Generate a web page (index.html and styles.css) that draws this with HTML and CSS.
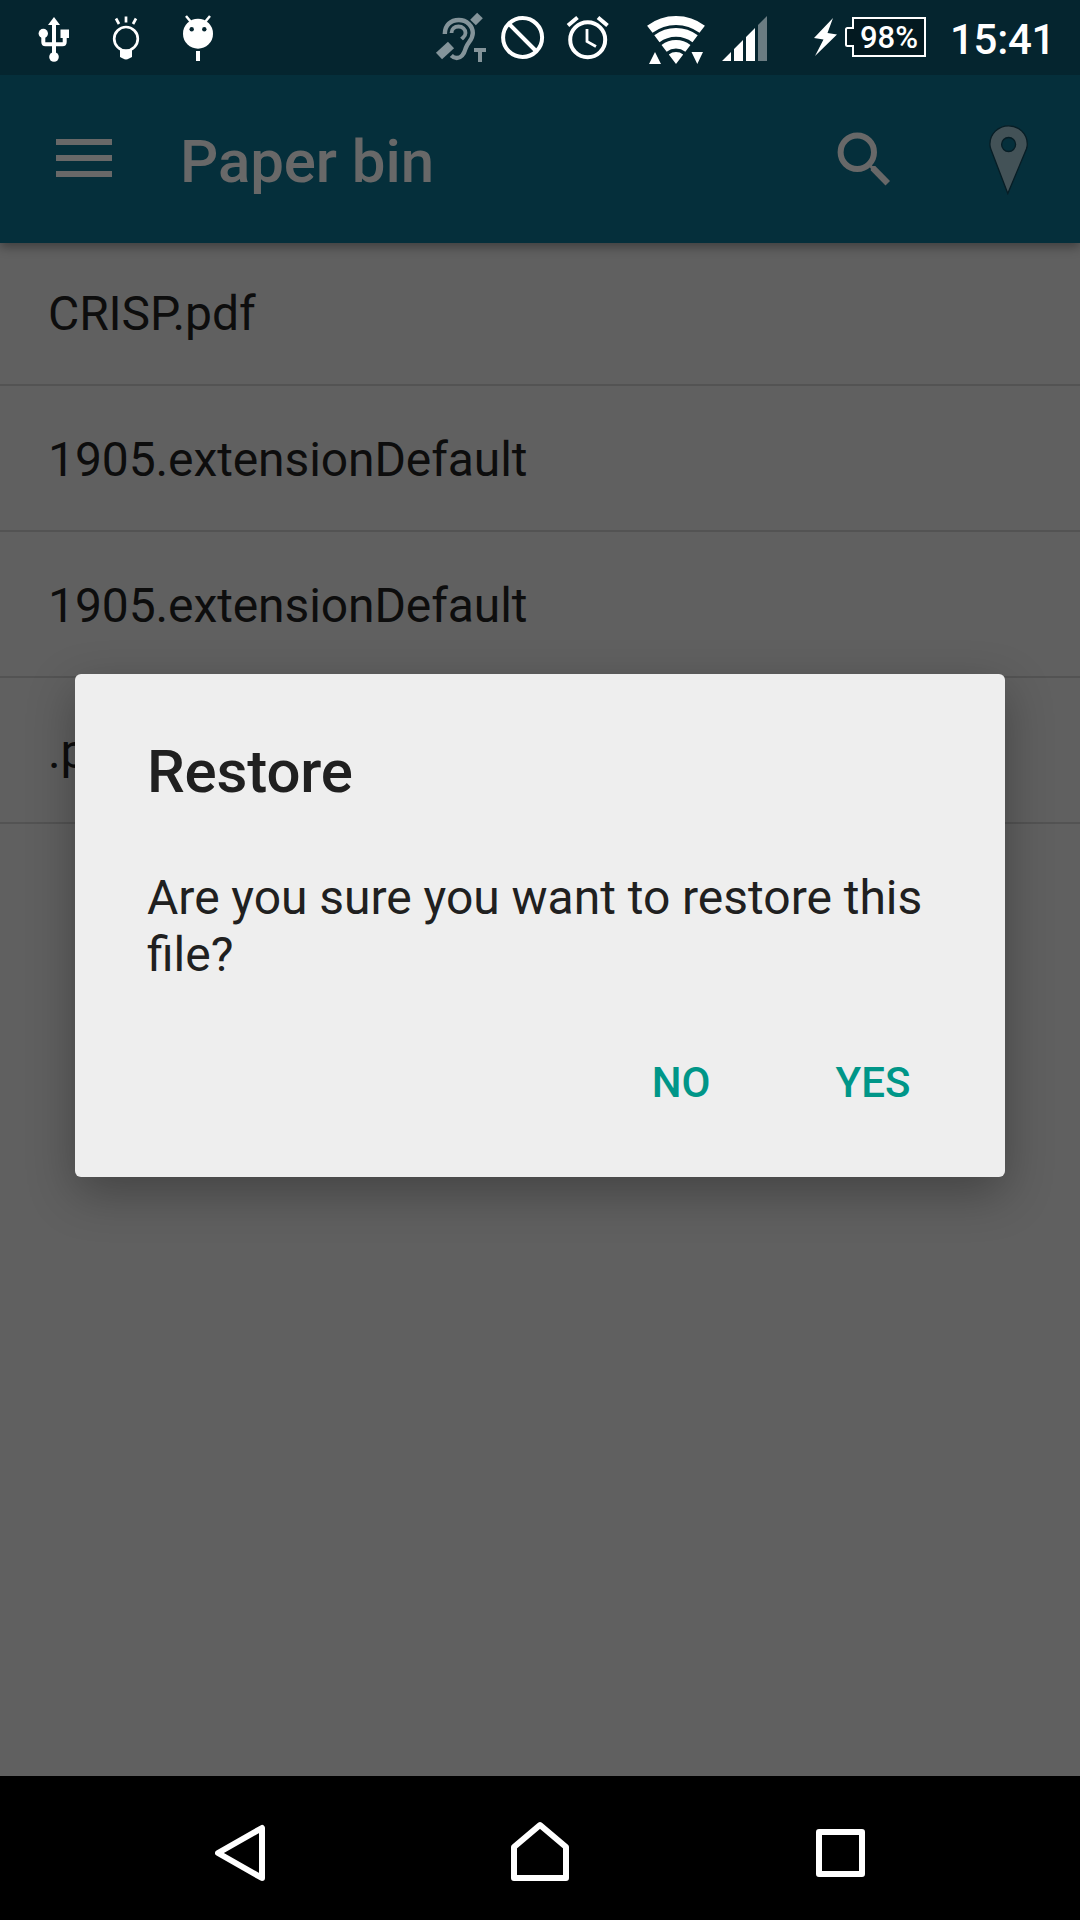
FILE: index.html
```html
<!DOCTYPE html>
<html lang="en">
<head>
<meta charset="utf-8">
<title>Paper bin</title>
<link rel="stylesheet" href="styles.css">
</head>
<body>
<div class="screen">
  <header class="status-bar">
    <div class="status-group">
      <svg class="icon-usb" viewBox="20 0 70 75" fill="#fff"><path d="M54 17l6 8h-4v35h-4V25h-4z"/><circle cx="43.3" cy="33.5" r="4.7"/><circle cx="54" cy="57" r="4.8"/><path d="M60.5 29.5H69V38h-8.500z"/><path d="M43.300 36v6q0 2.200 2.200 2.200h17q2.200 0 2.200-2.200v-6" fill="none" stroke="#fff" stroke-width="4"/></svg>
      <svg class="icon-bulb" viewBox="90 0 72 75" fill="none" stroke="#fff" stroke-width="2.7"><circle cx="126" cy="38.800" r="11.800"/><path d="M120 49q6 4 12 0v8l-3 1.500q-3 2-6 0l-3-1.500z" fill="#fff" stroke="none"/><path d="M126 16.500v6M116 18.500l3 5.500M136 18.500l-3 5.500"/></svg>
      <svg class="icon-bug" viewBox="162 0 72 75" fill="#fff"><circle cx="198" cy="33.700" r="15"/><path d="M186 16l5 6M210 16l-5 6" stroke="#fff" stroke-width="2.500"/><circle cx="191.700" cy="29.300" r="2.200" fill="#05252f"/><circle cx="204.300" cy="29.300" r="2.200" fill="#05252f"/><path d="M196 51h4v10h-4z"/></svg>
    </div>
    <div class="status-group">
      <svg class="icon-ear" viewBox="430 0 65 75" fill="none" stroke="#84949a"><path d="M444.800 34c0-9 6-14 14-14s14 6 14 13c0 7-5 9-7 15-2 7-5 10-9 10-3 0-4-1-5.500-2.500" stroke-width="4.400"/><path d="M451.500 33c0-4 3-6.500 7-6.500s7 3 7 6.500-2 4-4 6" stroke-width="3.800"/><path d="M439 56l12-11" stroke-width="9"/><path d="M473 22.500l7-7" stroke-width="8"/><path d="M474 50h12M480 50v12" stroke-width="4"/></svg>
      <svg class="icon-none" viewBox="495 0 60 75" fill="none" stroke="#fff" stroke-width="4"><circle cx="522.600" cy="37.500" r="19.500"/><path d="M509 24l27.500 27.500"/></svg>
      <svg class="icon-alarm" viewBox="555 0 75 75" fill="none" stroke="#fff" stroke-width="4"><circle cx="587.700" cy="39.700" r="17.500"/><path d="M568 25.500l9.500-8M598 17.500l9.500 8"/><path d="M587 29v12.500l9 5" stroke-width="2.800"/></svg>
      <svg class="icon-wifi" viewBox="630 0 85 75" fill="none" stroke="#fff"><path d="M649.800 29.250a43.500 43.500 0 0 1 52.400 0" stroke-width="9"/><path d="M656.900 38.700a31.700 31.700 0 0 1 38.200 0" stroke-width="8.700"/><path d="M664.100 48.300a19.700 19.700 0 0 1 23.800 0" stroke-width="8.500"/><path d="M676 64l-7.200-9.600a12 12 0 0 1 14.400 0zM655 52l6 12h-12zM691.500 52H703l-5.700 12z" fill="#fff" stroke="none"/></svg>
      <svg class="icon-signal" viewBox="715 0 95 75" fill="#fff"><path d="M722 61l9-9v9zM734 61V49l9-9v21zM746 61V37l9-9v33z"/><path d="M758 61V25l9-9v45z" fill="#6b7c82"/></svg>
      <svg class="icon-bolt" viewBox="810 0 34 75" fill="#fff"><path d="M833 18l-19 20 9.500 1.500L815 56l22-21.500-9.500-1.500z"/></svg>
      <div class="battery">
        <svg class="battery-shape" viewBox="844 0 83 75" fill="#031920" stroke="#fff" stroke-width="2"><path d="M854 18h71v38h-72V46h-5.500q-1.500 0-1.500-1.500v-15q0-1.500 1.500-1.500h5.500V18z"/></svg>
        <span class="battery-level">98%</span>
      </div>
      <span class="clock">15:41</span>
    </div>
  </header>

  <div class="app-bar">
    <svg class="menu-icon" viewBox="0 0 56 38" fill="#686868"><path d="M0 0h56v6H0zM0 16h56v6H0zM0 32h56v6H0z"/></svg>
    <h1 class="app-title">Paper bin</h1>
    <svg class="search-icon" viewBox="832 75 144 168" fill="none" stroke="#686868" stroke-width="6"><circle cx="857.300" cy="152.300" r="16.700"/><path d="M869 164.500l3.500 3.500" stroke-width="3"/><path d="M870.800 166h4.500L890 181l-4.500 4.500L870.800 170.500z" fill="#686868" stroke="none"/></svg>
    <svg class="pin-icon" viewBox="976 75 104 168" fill="#435257" stroke="#071d25" stroke-width="1.300"><path fill-rule="evenodd" d="M1007.800 193.500L990.800 149Q989.900 146.500 989.900 144a18.700 18.200 0 0 1 37.400 0q0 2.500-.9 5zM1015.600 144.500a7 7 0 1 0-14 0 7 7 0 1 0 14 0z"/></svg>
  </div>

  <main class="file-list">
    <div class="file-row file-row-first">CRISP.pdf</div>
    <div class="file-row">1905.extensionDefault</div>
    <div class="file-row">1905.extensionDefault</div>
    <div class="file-row">.pdf</div>
  </main>

  <nav class="nav-bar">
    <svg class="nav-back" viewBox="215 1820 51 64"><path d="M218 1853l44-25v50z"/></svg>
    <svg class="nav-home" viewBox="511 1820 58 64"><path d="M514 1878v-31l26-22 26 22v31z"/></svg>
    <svg class="nav-recent" viewBox="816 1820 49 64"><path d="M819 1832h43v42h-43z"/></svg>
  </nav>

  <section class="dialog" role="dialog">
    <h2 class="dialog-title">Restore</h2>
    <p class="dialog-text">Are you sure you want to restore this file?</p>
    <div class="dialog-actions">
      <button class="action">NO</button>
      <button class="action">YES</button>
    </div>
  </section>
</div>
</body>
</html>
```
FILE: styles.css
```css
* {
  box-sizing: border-box;
}

body {
  margin: 0;
  font-family: Roboto, "Liberation Sans", sans-serif;
}

.screen {
  position: relative;
  display: flex;
  flex-direction: column;
  width: 1080px;
  height: 1920px;
  overflow: hidden;
  background: #606060;
}

.status-bar {
  position: relative;
  z-index: 2;
  display: flex;
  justify-content: space-between;
  height: 75px;
  padding: 0 30px 0 20px;
  background: #05252f;
  color: #fff;
}

.status-group {
  display: flex;
}

.status-group svg {
  display: block;
  height: 75px;
}

.icon-usb { width: 70px; }
.icon-bulb,
.icon-bug { width: 72px; }
.icon-ear { width: 65px; filter: blur(0.6px); }
.icon-none { width: 60px; }
.icon-alarm { width: 75px; }
.icon-wifi { width: 85px; }
.icon-signal { width: 95px; }
.icon-bolt { width: 34px; }

.battery {
  position: relative;
  width: 83px;
}

.battery-level {
  position: absolute;
  left: 16px;
  top: 20px;
  font-size: 31px;
  font-weight: 500;
  line-height: 36px;
}

.clock {
  width: 100px;
  margin-left: 23px;
  font-size: 42px;
  font-weight: 500;
  letter-spacing: -0.3px;
  line-height: 80px;
  white-space: nowrap;
}

.app-bar {
  z-index: 1;
  display: flex;
  align-items: center;
  height: 168px;
  padding-left: 56px;
  background: #052f3b;
  box-shadow: 0 4px 10px rgba(0, 0, 0, 0.35);
}

.menu-icon {
  width: 56px;
  height: 38px;
  margin-top: -2px;
}

.app-title {
  flex: 1;
  margin: 6px 0 0 68px;
  color: #686868;
  font-size: 60px;
  font-weight: 500;
  letter-spacing: -0.08px;
  line-height: 70px;
}

.search-icon {
  width: 144px;
  height: 168px;
}

.pin-icon {
  width: 104px;
  height: 168px;
}

.file-list {
  flex: 1;
}

.file-row {
  height: 146px;
  padding-left: 48px;
  border-bottom: 2px solid #535353;
  color: #0d0d0d;
  font-size: 48px;
  letter-spacing: -0.1px;
  line-height: 148px;
}

.file-row-first {
  height: 143px;
  line-height: 142px;
}

.nav-bar {
  display: flex;
  height: 144px;
  padding: 44px 0 0 215px;
  background: #000;
}

.nav-bar svg {
  height: 64px;
  fill: none;
  stroke: #fff;
  stroke-width: 6px;
  stroke-linejoin: round;
}

.nav-back {
  width: 51px;
}

.nav-home {
  width: 58px;
  margin-left: 245px;
}

.nav-recent {
  width: 49px;
  margin-left: 247px;
}

.dialog {
  position: absolute;
  z-index: 3;
  left: 75px;
  top: 674px;
  width: 930px;
  height: 503px;
  padding: 63px 72px 0;
  border-radius: 6px;
  background: #eee;
  box-shadow: 0 16px 48px rgba(0, 0, 0, 0.3);
  color: #202020;
}

.dialog-title {
  margin: 0;
  font-size: 60px;
  font-weight: 500;
  letter-spacing: -0.15px;
  line-height: 70px;
}

.dialog-text {
  margin: 62px 0 0;
  font-size: 48px;
  line-height: 57px;
  word-spacing: -0.15px;
}

.dialog-actions {
  display: flex;
  justify-content: flex-end;
  margin-top: 45px;
  gap: 72px;
}

.action {
  min-width: 120px;
  height: 108px;
  padding: 0;
  border: 0;
  background: none;
  color: #009688;
  font: 500 42px Roboto, "Liberation Sans", sans-serif;
}
```
